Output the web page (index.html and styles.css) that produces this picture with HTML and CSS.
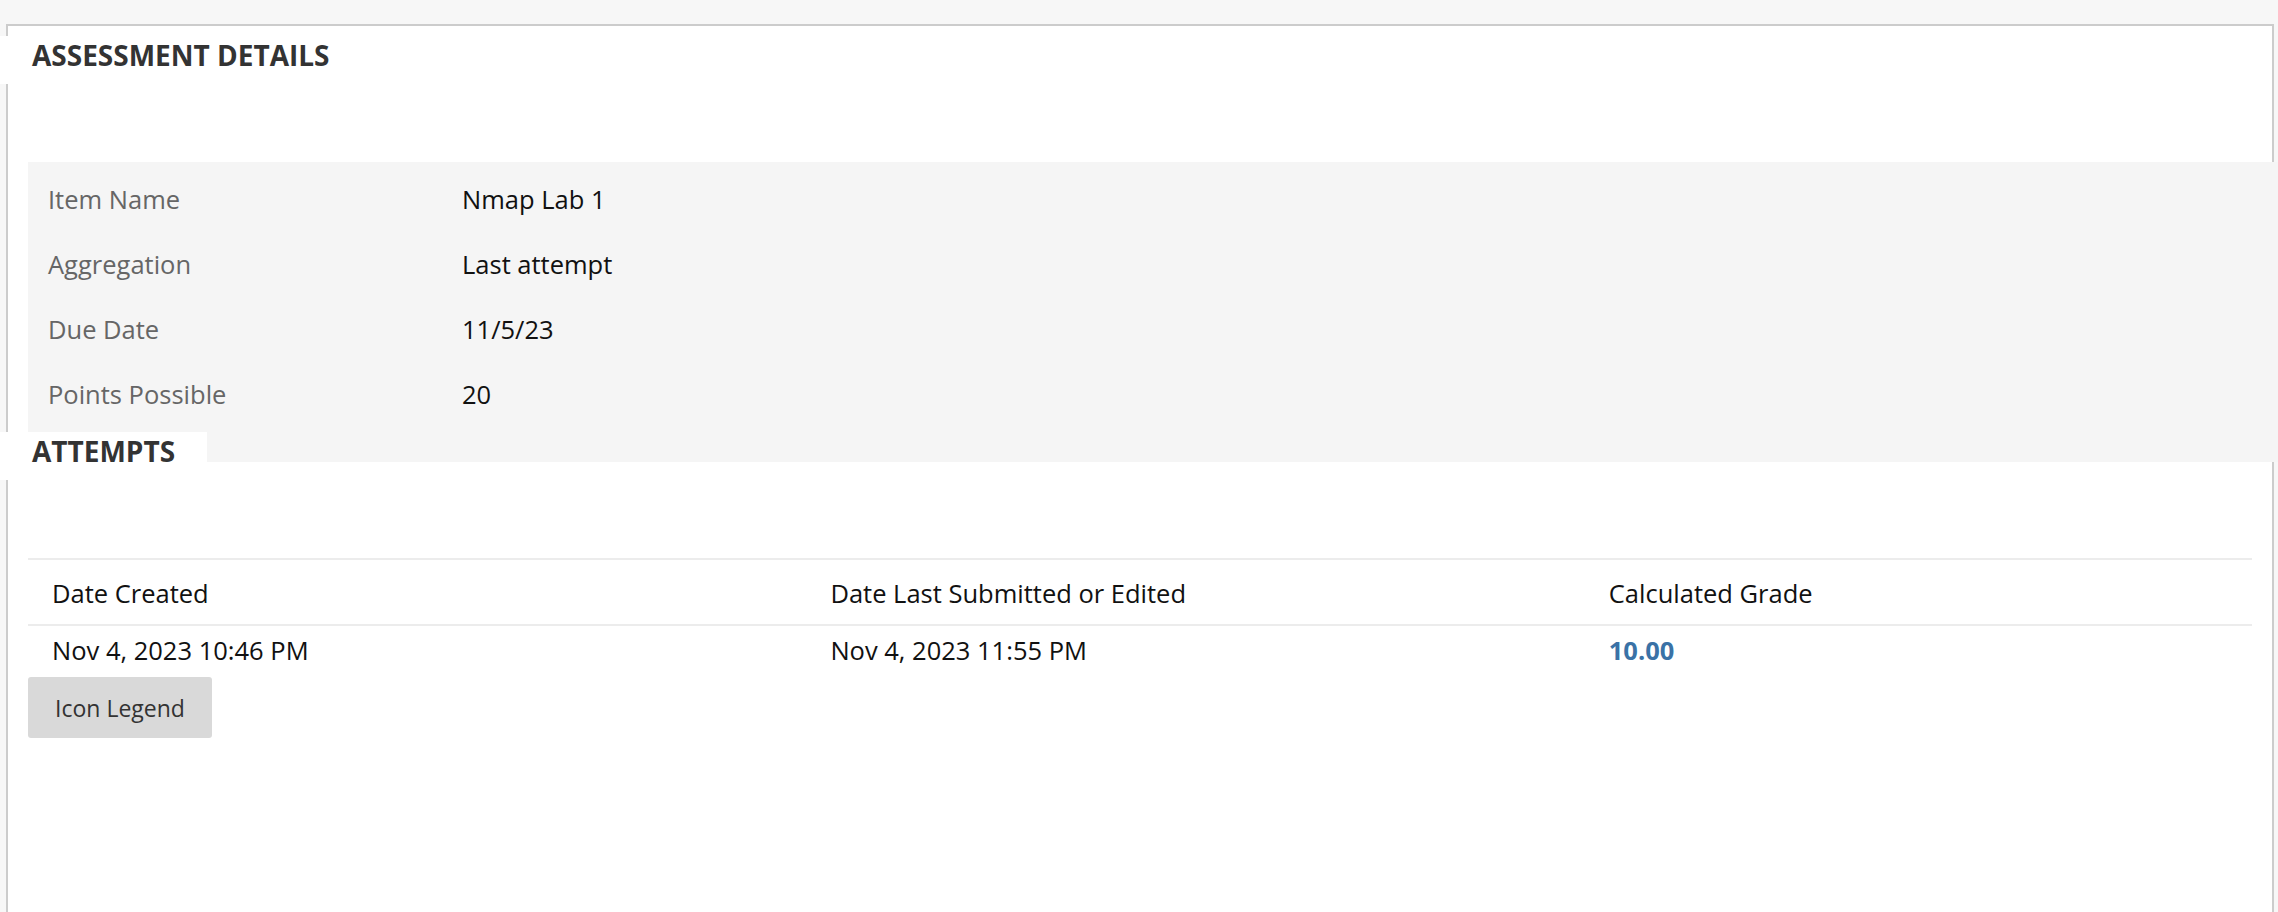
FILE: index.html
```html
<!DOCTYPE html>
<html lang="en">
<head>
<meta charset="utf-8">
<title>Assessment Details</title>
<link rel="stylesheet" href="styles.css">
</head>
<body>
<div class="panel">
  <h2 class="section-title">ASSESSMENT DETAILS</h2>
  <div class="details">
    <div class="detail-row"><span class="detail-label">Item Name</span><span class="detail-value">Nmap Lab 1</span></div>
    <div class="detail-row"><span class="detail-label">Aggregation</span><span class="detail-value">Last attempt</span></div>
    <div class="detail-row"><span class="detail-label">Due Date</span><span class="detail-value">11/5/23</span></div>
    <div class="detail-row"><span class="detail-label">Points Possible</span><span class="detail-value">20</span></div>
  </div>
  <h2 class="section-title section-title-overlap">ATTEMPTS</h2>
  <table class="attempts">
    <thead>
      <tr>
        <th class="col-created">Date Created</th>
        <th class="col-submitted">Date Last Submitted or Edited</th>
        <th class="col-grade">Calculated Grade</th>
      </tr>
    </thead>
    <tbody>
      <tr>
        <td>Nov 4, 2023 10:46 PM</td>
        <td>Nov 4, 2023 11:55 PM</td>
        <td><span class="grade">10.00</span></td>
      </tr>
    </tbody>
  </table>
  <button class="legend-btn" type="button">Icon Legend</button>
</div>
</body>
</html>
```

FILE: styles.css
```css
html, body {
  margin: 0;
  padding: 0;
  overflow: hidden;
}

body {
  background: #f7f7f7;
  font-family: "Open Sans", "Noto Sans", "Liberation Sans", sans-serif;
  color: #111;
}

.panel {
  box-sizing: border-box;
  margin: 24px 4px 0 6px;
  min-height: calc(100vh - 24px);
  background: #ffffff;
  border: 2px solid #cccccc;
  border-bottom: none;
}

.section-title {
  width: fit-content;
  margin: 10px 0 78px -8px;
  padding: 0 32px 10px 32px;
  background: #ffffff;
  color: #333333;
  font-size: 28px;
  font-weight: 700;
  line-height: 38px;
}

.section-title-overlap {
  margin-top: -30px;
}

.details {
  margin: 0 -6px 0 20px;
  padding: 4px 20px 36px 20px;
  background: #f5f5f5;
}

.detail-row {
  display: grid;
  grid-template-columns: 414px 1fr;
  height: 65px;
  align-items: center;
  font-size: 25.5px;
  line-height: 32px;
}

.detail-label {
  color: #666666;
}

.detail-value {
  color: #111111;
}

.attempts {
  width: calc(100% - 40px);
  margin: 0 20px;
  border-collapse: collapse;
  border-top: 2px solid #ececec;
  font-size: 25.5px;
  line-height: 32px;
  color: #111111;
}

.attempts th {
  text-align: left;
  font-weight: 400;
  padding: 17px 0 15px 24px;
  border-bottom: 2px solid #ececec;
}

.col-created { width: 35%; }
.col-submitted { width: 35%; }
.col-grade { width: 30%; }

.attempts td {
  padding: 8px 0 11px 24px;
}

.grade {
  color: #3a72a6;
  font-weight: 700;
}

.legend-btn {
  display: block;
  margin: 0 0 0 20px;
  width: 184px;
  height: 61px;
  padding: 0;
  border: none;
  border-radius: 3px;
  background: #d9d9d9;
  color: #333333;
  font-family: "Open Sans", "Noto Sans", "Liberation Sans", sans-serif;
  font-size: 23px;
  line-height: 32px;
}
```
